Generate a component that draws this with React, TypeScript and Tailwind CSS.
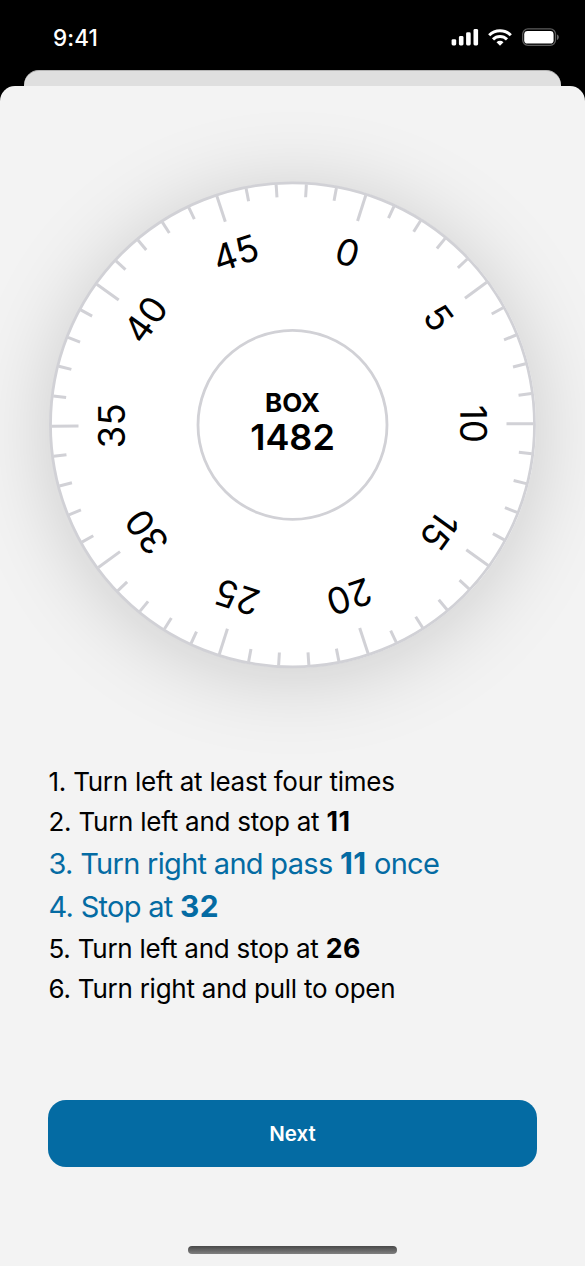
import React from "react";

const OFFSET = 17.7;
const CENTER = 243;

function StatusBar() {
  return (
    <header className="flex h-[70px] shrink-0 items-start justify-between pr-[26px] pl-[53px] text-white">
      <span className="pt-[25px] text-[22.5px] leading-[26px] font-medium tracking-[0.1px]">9:41</span>
      <svg className="mt-[27px] h-5 w-[109px]" viewBox="450 27 109 20" fill="currentColor">
        <rect x="451.6" y="39.2" width="4.6" height="6.3" rx="1.4" />
        <rect x="458.9" y="36" width="4.6" height="9.5" rx="1.4" />
        <rect x="466.1" y="32.3" width="4.6" height="13.2" rx="1.4" />
        <rect x="473.5" y="29" width="4.6" height="16.5" rx="1.4" />
        <g fill="none" stroke="currentColor" strokeWidth="3">
          <path d="M489.2 35.2a15.3 15.3 0 0 1 21.6 0" />
          <path d="M493 39.4a9.9 9.9 0 0 1 14 0" />
        </g>
        <path d="M500 45.8l-3.5-3.6a5 5 0 0 1 7 0z" />
        <rect x="522.7" y="28.9" width="32.8" height="16.4" rx="5.2" fill="none" stroke="#5c5c5c" strokeWidth="1.3" />
        <rect x="524.2" y="31" width="29.4" height="12.6" rx="3.4" />
        <path d="M557 34.6c2.4 1 2.4 4.2 0 5.4z" fill="#666" />
      </svg>
    </header>
  );
}

function Dial() {
  const ticks = Array.from({ length: 50 }, (_, i) => i);
  return (
    <div className="grid h-[486px] w-[486px] place-items-center rounded-full bg-white shadow-[0_8px_84px_rgba(0,0,0,0.17)]">
      <svg className="col-start-1 row-start-1 h-[486px] w-[486px] overflow-visible" viewBox="0.5 0.1 486 486">
        <g fill="none" stroke="#d1d1d6" strokeWidth="3">
          <circle cx={CENTER} cy={CENTER} r="242" strokeWidth="2.8" />
          <circle cx={CENTER} cy={CENTER} r="94.5" strokeWidth="2.8" />
          {ticks.map((i) => (
            <line
              key={i}
              x1={CENTER}
              x2={CENTER}
              y1="2"
              y2={i % 5 === 0 ? 29 : 15}
              transform={`rotate(${OFFSET + i * 7.2} ${CENTER} ${CENTER})`}
            />
          ))}
        </g>
        {ticks
          .filter((i) => i % 5 === 0)
          .map((i) => (
            <text
              key={i}
              x={CENTER}
              y="75.2"
              textAnchor="middle"
              className="fill-black text-[36.5px]"
              transform={`rotate(${OFFSET + i * 7.2} ${CENTER} ${CENTER})`}
            >
              {i}
            </text>
          ))}
      </svg>
      <div className="col-start-1 row-start-1 flex flex-col items-center pb-[6px] text-black">
        <span className="text-[26px] leading-[30px] font-bold tracking-[-0.1px]">BOX</span>
        <span className="text-[36px] leading-[38px] font-semibold">1482</span>
      </div>
    </div>
  );
}

const plain = "h-10 text-[26px] leading-10 tracking-[-0.25px]";
const active = "h-[43.5px] text-[29px] leading-[43.5px] tracking-[-0.7px] text-[#046ba3]";

function Strong({ children }: { children: React.ReactNode }) {
  return <b className="text-[1.03em] leading-none tracking-[0.4px]">{children}</b>;
}

export default function App() {
  return (
    <div className="flex h-[1266px] w-[585px] flex-col overflow-hidden bg-black font-['Inter',sans-serif]">
      <StatusBar />
      <div className="mx-6 h-[15.5px] shrink-0 rounded-t-[15px] border-t border-[#b5b5b5] bg-[#dfdfdf]" />
      <main className="flex flex-1 flex-col items-center rounded-t-[15px] bg-[#f3f3f3] pt-[96px]">
        <Dial />
        <ol className="mt-[94px] w-[489px] pl-[0.5px] text-black">
          <li className={plain}>1. Turn left at least four times</li>
          <li className={plain}>2. Turn left and stop at <Strong>11</Strong></li>
          <li className={active}>3. Turn right and pass <Strong>11</Strong> once</li>
          <li className={active}>4. Stop at <Strong>32</Strong></li>
          <li className={plain}>5. Turn left and stop at <Strong>26</Strong></li>
          <li className={plain}>6. Turn right and pull to open</li>
        </ol>
        <button className="mt-[91px] h-[67px] w-[489px] rounded-[18px] bg-[#046ba3] pt-[2px] text-[20.5px] font-semibold text-white">
          Next
        </button>
        <div className="mt-[79.5px] h-[7.5px] w-[209px] rounded-full bg-linear-to-b from-[#484848] to-[#808080]" />
      </main>
    </div>
  );
}
